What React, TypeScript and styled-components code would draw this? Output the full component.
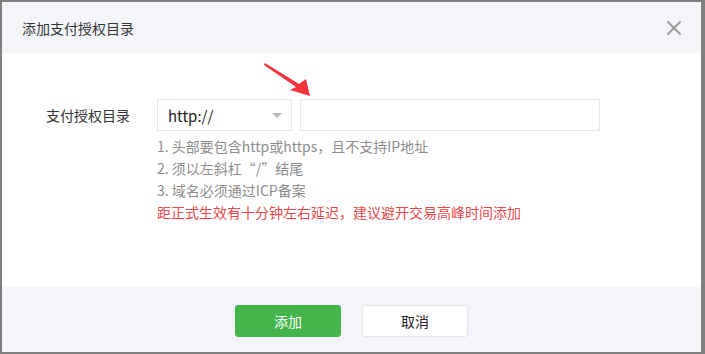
import React from "react";
import styled, { createGlobalStyle } from "styled-components";

const GlobalStyle = createGlobalStyle`
  html, body {
    margin: 0;
    padding: 0;
    background: #7f7f7f;
    font-family: "Noto Sans CJK SC", "Liberation Sans", sans-serif;
  }
`;

const Dialog = styled.div`
  position: relative;
  margin: 2px 0 0 2px;
  width: 699px;
  background: #fff;
`;

const Header = styled.div`
  height: 51px;
  display: flex;
  align-items: center;
  justify-content: space-between;
  padding: 0 22px 0 20px;
  background: #f4f5f9;
  box-sizing: border-box;
`;

const Title = styled.h3`
  margin: 0;
  font-size: 14px;
  font-weight: normal;
  color: #353535;
`;

const Close = styled.button`
  border: 0;
  background: none;
  padding: 0;
  width: 16px;
  height: 16px;
  display: flex;
  margin-right: -3px;
  cursor: pointer;
`;

const Body = styled.div`
  height: 234px;
  padding: 46px 0 0 44px;
  box-sizing: border-box;
  display: flex;
  align-items: flex-start;
`;

const Label = styled.label`
  width: 84px;
  margin-right: 27px;
  font-size: 14px;
  line-height: 32px;
  color: #353535;
  white-space: nowrap;
`;

const Field = styled.div`
  display: flex;
  flex-direction: column;
`;

const Controls = styled.div`
  display: flex;
  gap: 8px;
`;

const Select = styled.div`
  width: 135px;
  height: 32px;
  box-sizing: border-box;
  border: 1px solid #e4e6eb;
  display: flex;
  align-items: center;
  justify-content: space-between;
  padding: 0 9px 0 10px;
  font-size: 15px;
  color: #222;
`;

const Caret = styled.span`
  width: 0;
  height: 0;
  border-left: 5px solid transparent;
  border-right: 5px solid transparent;
  border-top: 5px solid #b5b5b5;
`;

const Input = styled.input`
  width: 300px;
  height: 32px;
  box-sizing: border-box;
  border: 1px solid #e4e6eb;
  outline: none;
  padding: 0 10px;
  font-size: 14px;
`;

const Hints = styled.ul`
  list-style: none;
  margin: 4px 0 0;
  padding: 0;
`;

const Hint = styled.li<{ $warn?: boolean }>`
  font-size: 14px;
  line-height: 22px;
  color: ${({ $warn }) => ($warn ? "#e8494b" : "#8d8d8d")};
  white-space: nowrap;
`;

const Arrow = styled.svg`
  position: absolute;
  left: 253px;
  top: 51px;
`;

const Footer = styled.div`
  height: 65px;
  background: #f4f5f9;
  display: flex;
  justify-content: center;
  gap: 21px;
  padding-top: 18px;
  box-sizing: border-box;
`;

const Button = styled.button<{ $primary?: boolean }>`
  width: 106px;
  height: 32px;
  border-radius: 3px;
  font-family: inherit;
  font-size: 14px;
  cursor: pointer;
  border: 1px solid ${({ $primary }) => ($primary ? "#44b549" : "#e1e4e8")};
  background: ${({ $primary }) => ($primary ? "#44b549" : "#fff")};
  color: ${({ $primary }) => ($primary ? "#fff" : "#222")};
`;

export default function App() {
  return (
    <>
      <GlobalStyle />
      <Dialog>
        <Header>
          <Title>添加支付授权目录</Title>
          <Close aria-label="关闭">
            <svg width="16" height="16" viewBox="0 0 16 16">
              <path d="M1.5 1.5 L14.5 14.5 M14.5 1.5 L1.5 14.5" stroke="#9a9a9a" strokeWidth="2" />
            </svg>
          </Close>
        </Header>
        <Body>
          <Label>支付授权目录</Label>
          <Field>
            <Controls>
              <Select>
                <span>http://</span>
                <Caret />
              </Select>
              <Input />
            </Controls>
            <Hints>
              <Hint>1. 头部要包含http或https，且不支持IP地址</Hint>
              <Hint>2. 须以左斜杠“/”结尾</Hint>
              <Hint>3. 域名必须通过ICP备案</Hint>
              <Hint $warn>距正式生效有十分钟左右延迟，建议避开交易高峰时间添加</Hint>
            </Hints>
          </Field>
        </Body>
        <Arrow width="60" height="45" viewBox="0 0 60 45">
          <polygon points="10,10 44,31 51,26 55,43 35,37 41,34 9,12" fill="#f5333a" />
        </Arrow>
        <Footer>
          <Button $primary>添加</Button>
          <Button>取消</Button>
        </Footer>
      </Dialog>
    </>
  );
}
